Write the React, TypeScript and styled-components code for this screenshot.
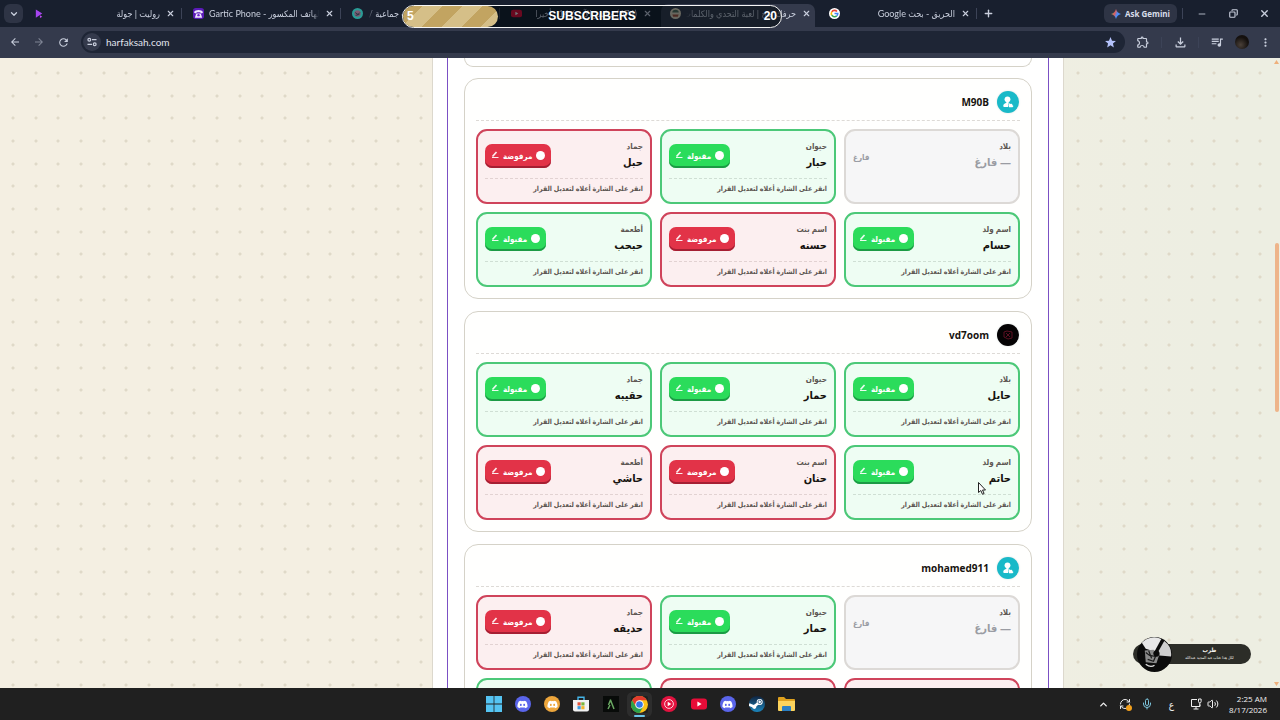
import React from 'react';
import styled, { createGlobalStyle, css } from 'styled-components';
import { ChevronDown, ChevronUp, X, Plus, Minus, Copy, Mic, Volume2, RefreshCw } from 'lucide-react';
import { FaDiscord, FaSteam } from 'react-icons/fa6';
import { MdArrowBack, MdArrowForward, MdRefresh, MdStar, MdOutlineExtension, MdOutlineFileDownload, MdQueueMusic, MdMoreVert } from 'react-icons/md';

type Status = 'ok' | 'no' | 'empty';
type Entry = { label: string; value: string; status: Status };
type Player = { name: string; dark?: boolean; entries: Entry[] };

const players: Player[] = [
  {
    name: 'M90B',
    entries: [
      { label: 'بلاد', value: '— فارغ', status: 'empty' },
      { label: 'حيوان', value: 'حبار', status: 'ok' },
      { label: 'جماد', value: 'حبل', status: 'no' },
      { label: 'اسم ولد', value: 'حسام', status: 'ok' },
      { label: 'اسم بنت', value: 'حسنه', status: 'no' },
      { label: 'أطعمة', value: 'حبحب', status: 'ok' },
    ],
  },
  {
    name: 'vd7oom',
    dark: true,
    entries: [
      { label: 'بلاد', value: 'حايل', status: 'ok' },
      { label: 'حيوان', value: 'حمار', status: 'ok' },
      { label: 'جماد', value: 'حقيبه', status: 'ok' },
      { label: 'اسم ولد', value: 'حاتم', status: 'ok' },
      { label: 'اسم بنت', value: 'حنان', status: 'no' },
      { label: 'أطعمة', value: 'حاشي', status: 'no' },
    ],
  },
  {
    name: 'mohamed911',
    entries: [
      { label: 'بلاد', value: '— فارغ', status: 'empty' },
      { label: 'حيوان', value: 'حمار', status: 'ok' },
      { label: 'جماد', value: 'حديقه', status: 'no' },
      { label: 'اسم ولد', value: 'حسن', status: 'no' },
      { label: 'اسم بنت', value: 'حنين', status: 'no' },
      { label: 'أطعمة', value: 'حمص', status: 'ok' },
    ],
  },
];

const tones = {
  ok: { border: '#4cc878', fill: '#eefdf3', button: '#2bdc5b', edge: '#1c9a45' },
  no: { border: '#cf445b', fill: '#fceff0', button: '#e23348', edge: '#a51f33' },
  empty: { border: '#dcd9d6', fill: '#f6f6f7', button: '#f6f6f7', edge: '#f6f6f7' },
};

/* three dots per 68px tile in each direction */
const dotSteps = [0, 23, 45];
const dotGrid = dotSteps.flatMap(y => dotSteps.map(x => ({ x, y })));
const dotImages = dotGrid.map(() => 'radial-gradient(circle at 13px 15px, #dfd9c8 1px, transparent 2px)').join(',');
const dotPositions = dotGrid.map(d => `${d.x}px ${d.y}px`).join(',');
const dotSizes = dotGrid.map(() => '68px 68px').join(',');

const GlobalStyle = createGlobalStyle`
  * { box-sizing: border-box; }
  body { margin: 0; font-family: "Open Sans", "DejaVu Sans Condensed", "DejaVu Sans", sans-serif; }
  button { font: inherit; border: 0; padding: 0; margin: 0; background: none; color: inherit; }
  svg { display: block; flex: none; }
`;

const Desktop = styled.div`
  height: 100vh;
  display: flex;
  flex-direction: column;
  overflow: hidden;
  position: relative;
`;

const TabStrip = styled.div`
  height: 27px;
  flex: none;
  display: flex;
  align-items: center;
  padding-left: 4px;
  background: #181f2e;
  color: #c9cfdd;
`;

const TabMenu = styled.button`
  width: 19px;
  height: 19px;
  border-radius: 6px;
  background: #2e3445;
  display: grid;
  place-items: center;
`;

const Tab = styled.div<{ $active?: boolean }>`
  height: 23px;
  margin: 4px 2px 0;
  padding: 0 3px 4px 9px;
  display: flex;
  align-items: center;
  gap: 5px;
  flex: 0 1 154px;
  min-width: 0;
  border-radius: 7px 7px 0 0;
  background: ${p => (p.$active ? '#343a4c' : 'transparent')};
`;

const TabTitle = styled.span<{ $ltr?: boolean }>`
  flex: 1;
  min-width: 0;
  overflow: hidden;
  white-space: nowrap;
  direction: ${p => (p.$ltr ? 'ltr' : 'rtl')};
  font-family: Lato, "DejaVu Sans Condensed", "DejaVu Sans", sans-serif;
  font-size: 9px;
  line-height: 14px;
  mask-image: linear-gradient(${p => (p.$ltr ? 'to left' : 'to right')}, transparent, #000 8px);
`;

const IconButton = styled.button<{ $size?: number }>`
  width: ${p => p.$size ?? 16}px;
  height: ${p => p.$size ?? 16}px;
  display: grid;
  place-items: center;
  flex: none;
`;

const Rule = styled.span<{ $hidden?: boolean }>`
  width: 1px;
  height: 11px;
  flex: none;
  background: ${p => (p.$hidden ? 'transparent' : '#3c4357')};
`;

const Spacer = styled.div`
  flex: 1;
`;

const GeminiButton = styled.button`
  width: 73px;
  height: 19px;
  margin-right: 5px;
  border-radius: 6px;
  background: #2e3445;
  color: #d9deea;
  display: flex;
  align-items: center;
  justify-content: center;
  gap: 4px;
  font-size: 8px;
  font-weight: 700;
  flex: none;
`;

const WindowButtons = styled.div`
  display: flex;
  gap: 15px;
  padding: 0 8px 0 11px;
`;

const Toolbar = styled.div`
  height: 31px;
  flex: none;
  display: flex;
  align-items: center;
  gap: 8px;
  padding: 0 7px 1px;
  background: #343a4c;
  color: #c9cfdd;
`;

const Address = styled.label`
  flex: 1;
  height: 22px;
  margin-left: 2px;
  padding: 0 8px 0 2px;
  border-radius: 11px;
  background: #1e2535;
  display: flex;
  align-items: center;
  gap: 5px;
`;

const SiteInfo = styled.span`
  width: 18px;
  height: 18px;
  border-radius: 50%;
  background: #343a4c;
  display: grid;
  place-items: center;
`;

const AddressInput = styled.input`
  flex: 1;
  min-width: 0;
  border: 0;
  padding: 0;
  background: none;
  color: #e0e4ee;
  font: 10px/16px Lato, sans-serif;
`;

const Portrait = styled.span`
  width: 14px;
  height: 14px;
  border-radius: 50%;
  background: radial-gradient(circle at 40% 70%, #4a4038, #14100e 60%);
`;

const Goal = styled.div`
  position: absolute;
  z-index: 2;
  top: 5px;
  left: calc(50% - 238px);
  width: 380px;
  height: 23px;
  border: 1px solid #f4f4f4;
  border-radius: 12px;
  background: rgba(0, 8, 12, 0.55);
  color: #fff;
  font: bold 12px/21px "Liberation Sans", sans-serif;
  display: grid;
  grid-template-columns: 1fr auto 1fr;
  padding: 0 4px;
  overflow: hidden;
`;

const GoalFill = styled.span`
  position: absolute;
  z-index: -1;
  inset: 0 auto 0 0;
  width: 25%;
  border-radius: 0 12px 12px 0;
  background: repeating-linear-gradient(135deg, #c2a461 0 14px, #d5bf88 14px 28px);
`;

const GoalTarget = styled.span`
  text-align: right;
`;

const Viewport = styled.main`
  flex: 1;
  min-height: 0;
  overflow: hidden;
  position: relative;
  padding-left: 216px;
  background-color: #f4efe2;
  background-image: ${dotImages}, linear-gradient(90deg, #f4efe2 50%, #edeee2 95%);
  background-position: ${dotPositions}, 0 0;
  background-size: ${dotSizes}, auto;
`;

const Sheet = styled.div`
  width: 100%;
  max-width: 632px;
  margin: 0 auto;
  padding: 0 14px;
  border: solid #dcd8cd;
  border-width: 0 1px;
  background: #fff;
`;

const Board = styled.div`
  direction: rtl;
  border: solid #7b50c4;
  border-width: 0 1px;
  padding: 0 16px;
  display: flex;
  flex-direction: column;
  gap: 12px;
`;

const Panel = styled.section`
  border: 1px solid #d5d2c8;
  border-radius: 14px;
  padding: 12px 11px 11px;
  background: #fffffe;
`;

const PanelTail = styled.div`
  height: 9px;
  margin-bottom: -1px;
  border: 1px solid #d5d2c8;
  border-top: 0;
  border-radius: 0 0 14px 14px;
`;

const PanelHead = styled.header`
  display: flex;
  align-items: center;
  gap: 8px;
  padding: 0 1px 7px 0;
  margin-bottom: 8px;
  border-bottom: 1px dashed #dddad6;
`;

const Avatar = styled.span<{ $dark?: boolean }>`
  width: 22px;
  height: 22px;
  border-radius: 50%;
  display: grid;
  place-items: center;
  color: ${p => (p.$dark ? '#5c1022' : '#fff')};
  background: ${p => (p.$dark ? '#050304' : '#19b9c8')};
  box-shadow: 0 0 2px #d4dcdc;
`;

const PlayerName = styled.h2`
  margin: 0;
  font-family: "Open Sans", sans-serif;
  font-size: 10px;
  line-height: 22px;
  font-weight: 700;
  color: #17130f;
`;

const Answers = styled.div`
  display: grid;
  grid-template-columns: repeat(3, minmax(0, 1fr));
  gap: 8px;
`;

const Answer = styled.article<{ $status: Status }>`
  min-height: 75px;
  padding: 7px 7px 6px;
  border: 2px solid ${p => tones[p.$status].border};
  border-radius: 11px;
  background: ${p => tones[p.$status].fill};
`;

const AnswerTop = styled.div`
  min-height: 36px;
  display: flex;
  justify-content: space-between;
  align-items: center;
`;

const AnswerText = styled.div`
  align-self: flex-start;
`;

const Category = styled.div`
  font-size: 8px;
  line-height: 15px;
  font-weight: 700;
  color: #5c5652;
`;

const Word = styled.div<{ $muted?: boolean }>`
  font-size: 11px;
  line-height: 18px;
  font-weight: 700;
  color: ${p => (p.$muted ? '#9a9ca3' : '#17130f')};
`;

const Verdict = styled.button<{ $status: Status }>`
  height: 24px;
  padding: 0 6px 2px;
  display: flex;
  align-items: center;
  gap: 4px;
  border-radius: 7px;
  font-size: 8px;
  font-weight: 700;
  color: #fff;
  background: ${p => tones[p.$status].button};
  box-shadow: inset 0 -2px 0 ${p => tones[p.$status].edge};
`;

const Bullet = styled.span`
  width: 9px;
  height: 9px;
  border-radius: 50%;
  background: #fff;
`;

const EmptyMark = styled.span`
  font-size: 8px;
  font-weight: 700;
  color: #9a9ca3;
`;

const Hint = styled.p<{ $status: Status }>`
  margin: 4px 0 0;
  padding-top: 3px;
  border-top: 1px dashed ${p => (p.$status === 'ok' ? '#cfdfd4' : '#e2d2d2')};
  font-size: 7px;
  line-height: 14px;
  font-weight: 700;
  color: #5c5652;
  white-space: nowrap;
`;

const ScrollRail = styled.div`
  position: absolute;
  inset: 0 0 0 auto;
  width: 7px;
  padding: 2px 0;
  display: grid;
  grid-template-rows: 4px 179fr 169fr 270fr 4px;
  justify-items: center;
`;

const ScrollThumb = styled.span`
  grid-row: 3;
  width: 4px;
  border-radius: 2px;
  background: #eeb48a;
`;

const ScrollArrow = styled.svg<{ $end?: boolean }>`
  grid-row: ${p => (p.$end ? 5 : 1)};
`;

const NowPlaying = styled.aside`
  position: absolute;
  right: 29px;
  bottom: 16px;
  width: 118px;
  height: 36px;
  display: grid;
  grid-template-columns: 4px 35px 1fr;
  align-items: center;
`;

const Track = styled.div`
  grid-area: 1 / 1 / 2 / 4;
  height: 20px;
  padding: 2px 0 0 35px;
  border-radius: 10px;
  background: #2c2d28;
  color: #f2f2ec;
  text-align: center;
  direction: rtl;
`;

const TrackTitle = styled.div`
  font-size: 6px;
  line-height: 9px;
  font-weight: 700;
`;

const TrackArtist = styled.div`
  font-size: 4px;
  line-height: 6px;
`;

const Album = styled.svg`
  grid-area: 1 / 2;
`;

const Taskbar = styled.footer`
  height: 32px;
  flex: none;
  display: grid;
  grid-template-columns: 1fr 310px 1fr;
  align-items: center;
  background: #202020;
  color: #f0f0f0;
`;

const Apps = styled.nav`
  display: flex;
  justify-content: space-between;
  grid-column: 2;
`;

const focusedApp = css`
  box-shadow: 0 0 0 4px #2d2d2d;
  &::after {
    content: '';
    position: absolute;
    left: 3px;
    right: 3px;
    bottom: -4px;
    height: 2px;
    border-radius: 1px;
    background: #6cc6ea;
  }
`;

const AppButton = styled.button<{ $focused?: boolean }>`
  width: 17px;
  height: 17px;
  display: grid;
  place-items: center;
  border-radius: 2px;
  position: relative;
  ${p => p.$focused && focusedApp}
`;

const Disc = styled.span<{ $color: string }>`
  width: 16px;
  height: 16px;
  border-radius: 50%;
  background: ${p => p.$color};
  color: #fff;
  display: grid;
  place-items: center;
`;

const Tray = styled.div`
  display: flex;
  align-items: center;
  justify-content: flex-end;
  gap: 10px;
  padding-right: 13px;
`;

const TrayPair = styled.div`
  display: flex;
  gap: 5px;
`;

const Sync = styled.span`
  position: relative;
  &::after {
    content: '';
    position: absolute;
    right: -1px;
    bottom: -1px;
    width: 6px;
    height: 6px;
    border-radius: 50%;
    background: #f3a01c;
  }
`;

const Language = styled.span`
  padding: 0 6px;
  font-size: 10px;
`;

const Clock = styled.time`
  text-align: right;
  font-size: 8px;
  line-height: 11px;
`;

const Pointer = styled.svg`
  position: absolute;
  left: calc(50% + 338px);
  top: 482px;
`;

const RouletteIcon = () => (
  <svg width="11" height="11" viewBox="0 0 12 12"><path d="M2 1.500l7 4.500-2.500 1.500L2 10.500z" fill="#a645f0" /><path d="M6.500 8l2.500 1.500L6.500 11z" fill="#c04df0" /></svg>
);
const PhoneIcon = () => (
  <svg width="11" height="11" viewBox="0 0 12 12"><rect width="12" height="12" rx="3" fill="#5a1bb8" /><path d="M1 4.500C2.500 1.500 9.500 1.500 11 4.500L9.500 6 7.500 4.500h-3L2.500 6zM3.500 6h5l1.500 4.500h-8z" fill="#f0e6ff" /><circle cx="6" cy="7.800" r="1.300" fill="#6a1fd0" /></svg>
);
const GroupIcon = () => (
  <svg width="11" height="11" viewBox="0 0 12 12"><circle cx="6" cy="6" r="6" fill="#2a9c96" /><circle cx="6" cy="6" r="3.500" fill="#7e5b73" /><path d="M3.500 5l3 2 2-2M4 8l4-1" stroke="#203440" fill="none" /></svg>
);
const YouTubeIcon = ({ w = 16 }: { w?: number }) => (
  <svg width={w} height={w} viewBox="0 0 16 16"><rect y="2.500" width="16" height="11" rx="3" fill="#e80c38" /><path d="M6.400 5.500v5l4.200-2.500z" fill="#fff" /></svg>
);
const HarfIcon = () => (
  <svg width="11" height="11" viewBox="0 0 12 12"><circle cx="6" cy="6" r="6" fill="#e6dcc4" /><path d="M2.500 5a3.500 3 0 0 1 7 0z" fill="#57735f" /><path d="M2.500 7h7l-1 2.500h-5z" fill="#a8563e" /></svg>
);
const GoogleIcon = () => (
  <svg width="11" height="11" viewBox="0 0 12 12"><circle cx="6" cy="6" r="6" fill="#fff" /><g fill="none" strokeWidth="1.700"><path d="M8.700 3.800A3.600 3.600 0 0 0 3 4.200" stroke="#ea4335" /><path d="M3 4.200a3.600 3.600 0 0 0 0 3.600" stroke="#fbbc05" /><path d="M3 7.800a3.600 3.600 0 0 0 5.400.8" stroke="#34a853" /><path d="M8.400 8.600A3.600 3.600 0 0 0 9.600 6H6" stroke="#4285f4" /></g></svg>
);
const GeminiIcon = () => (
  <svg width="10" height="10" viewBox="0 0 12 12"><defs><linearGradient id="gem" x1="0" y1="0.300" x2="1" y2="0.700"><stop offset="0" stopColor="#43b56f" /><stop offset=".35" stopColor="#e35b57" /><stop offset=".6" stopColor="#4b8df8" /><stop offset="1" stopColor="#4b8df8" /></linearGradient></defs><path d="M6 0q1.200 4.800 6 6-4.800 1.200-6 6-1.200-4.800-6-6 4.800-1.200 6-6z" fill="url(#gem)" /></svg>
);
const TuneIcon = () => (
  <svg width="10" height="10" viewBox="0 0 10 10" fill="none" stroke="currentColor" strokeWidth="1.200"><circle cx="2.300" cy="2.700" r="1.400" /><path d="M5 2.700h4.500M.5 7.300H5" /><circle cx="7.700" cy="7.300" r="1.400" /></svg>
);
const ChromeIcon = () => (
  <svg width="17" height="17" viewBox="0 0 16 16"><circle cx="8" cy="8" r="8" fill="#fbc116" /><path d="M8 4h6.930A8 8 0 0 0 1.070 4L4.600 10z" fill="#e33b2e" /><path d="M1.070 4A8 8 0 0 0 8 16l3.500-6H4.600z" fill="#2ba24c" /><circle cx="8" cy="8" r="4" fill="#fff" /><circle cx="8" cy="8" r="3.100" fill="#3478e8" /></svg>
);
const WindowsIcon = () => (
  <svg width="16" height="16" viewBox="0 0 16 16" fill="#55c4f2"><path d="M0 0h7.600v7.600H0zM8.400 0H16v7.600H8.400zM0 8.400h7.600V16H0zM8.400 8.400H16V16H8.400z" /></svg>
);
const StoreIcon = () => (
  <svg width="16" height="16" viewBox="0 0 16 16"><path d="M5 5V1.200h6V5" fill="none" stroke="#45b5e8" strokeWidth="1.400" /><path d="M0 4h16v9.500a2 2 0 0 1-2 2H2a2 2 0 0 1-2-2z" fill="#f2f2f2" /><path d="M4.500 6.300h3.200v3.200H4.500z" fill="#e2543b" /><path d="M8.300 6.300h3.200v3.200H8.300z" fill="#7cb63c" /><path d="M4.500 10.100h3.200v3.200H4.500z" fill="#3a9be0" /><path d="M8.300 10.100h3.200v3.200H8.300z" fill="#f2b42c" /></svg>
);
const LambdaIcon = () => (
  <svg width="16" height="16" viewBox="0 0 16 16"><rect width="16" height="16" fill="#080b09" /><path d="M5 13l2-4M7.300 3.500L11 13M7.500 4L5.500 9" fill="none" stroke="#6aa862" strokeWidth="1.500" /></svg>
);
const MusicIcon = () => (
  <svg width="16" height="16" viewBox="0 0 16 16"><circle cx="8" cy="8" r="8" fill="#e3123f" /><circle cx="8" cy="8" r="4.400" fill="none" stroke="#fff" strokeWidth=".8" /><path d="M6.700 5.700v4.600L10.300 8z" fill="#fff" /></svg>
);
const FolderIcon = () => (
  <svg width="17" height="16" viewBox="0 0 17 16"><path d="M0 2a1 1 0 0 1 1-1h5l2 2h8a1 1 0 0 1 1 1v3H0z" fill="#dfa11e" /><path d="M0 5h17v9a1 1 0 0 1-1 1H1a1 1 0 0 1-1-1z" fill="#fbd35c" /><path d="M4 15v-4a1 1 0 0 1 1-1h7a1 1 0 0 1 1 1v4z" fill="#2a7fc4" /></svg>
);
const SteamDisc = () => (
  <svg width="16" height="16" viewBox="0 0 16 16"><defs><linearGradient id="steam" x1="0" y1="0" x2="0" y2="1"><stop offset="0" stopColor="#10233f" /><stop offset="1" stopColor="#1b86bd" /></linearGradient></defs><circle cx="8" cy="8" r="8" fill="url(#steam)" /><path d="M0 8.500l5 2L9.500 7" fill="none" stroke="#fff" strokeWidth="2.600" /><circle cx="5.300" cy="10.800" r="2.100" fill="#fff" /><circle cx="10.700" cy="5.900" r="3" fill="#fff" /><circle cx="10.700" cy="5.900" r="1.700" fill="none" stroke="#1a4d76" strokeWidth=".8" /></svg>
);
const NetworkIcon = () => (
  <svg width="12" height="12" viewBox="0 0 12 12" fill="none" stroke="currentColor"><path d="M7 1.500H1.500v7H10V6.500M3.500 11h5M6 8.500V11" /><path d="M8.500 1v2.500a1.300 1.300 0 0 0 2.600 0V1zM9.800 5v3" /></svg>
);
const EditIcon = () => (
  <svg width="8" height="8" viewBox="0 0 8 8" fill="none" stroke="#fff" strokeOpacity=".9"><path d="M1 6.500h6.500" /><path d="M1.500 5.500L5.500 1" strokeWidth="1.700" /></svg>
);
const PersonIcon = () => (
  <svg width="12" height="12" viewBox="0 0 12 12" fill="currentColor"><circle cx="5.500" cy="3.300" r="2.900" /><path d="M4.300 5.500h2.400v1.800L6 11H2.200C1 11 1 9.500 1.800 8.300 2.400 7.400 4.300 7 4.300 7z" /><path d="M7.500 7l1 1 1.500-.3.500 1.500 1 .8-1 1.200H7L6.600 9.500z" /></svg>
);
const SketchIcon = () => (
  <svg width="12" height="12" viewBox="0 0 12 12" fill="none" stroke="currentColor"><path d="M2 3l3-1 5 1v6l-4 1-4-2zM4 4l4 4M8 4L4 8" /></svg>
);
const AlbumArt = () => (
  <Album width="35" height="35" viewBox="0 0 36 36">
    <circle cx="18" cy="18" r="18" fill="#0c0c0c" />
    <path d="M5 6A17 17 0 0 1 25 2L18 15 9 12z" fill="#e8e8e8" />
    <path d="M28 4a17 17 0 0 1 7 16l-12-1-1-4z" fill="#cfcfcf" />
    <path d="M8 14l9-1 6 5-3 9-11-1z" fill="#8a8a8a" />
    <path d="M9 16l4 3 6 1-2 5-6-2M12 14l3 8" fill="none" stroke="#1c1c1c" strokeWidth="1.300" />
    <path d="M9 28q5 4 9 1" fill="none" stroke="#ddd" strokeWidth="1.300" />
    <circle cx="20" cy="17" r="3.200" fill="#0a0a0a" />
  </Album>
);

const tabs = [
  { icon: <RouletteIcon />, title: 'روليت | جولة' },
  { icon: <PhoneIcon />, title: 'Gartic Phone - لعبة الهاتف المكسور', ltr: true },
  { icon: <GroupIcon />, title: 'العب مع أصحابك ألعاب جماعية / مجانا' },
  { icon: <YouTubeIcon w={11} />, title: '(674) مباشر الآن 14.6 : أخيرا' },
  { icon: <HarfIcon />, title: 'حرفك صح | لعبة التحدي والكلمات', active: true },
  { icon: <GoogleIcon />, title: 'الحريق - بحث Google' },
];

const AnswerCard = ({ entry }: { entry: Entry }) => (
  <Answer $status={entry.status}>
    <AnswerTop>
      <AnswerText>
        <Category>{entry.label}</Category>
        <Word $muted={entry.status === 'empty'}>{entry.value}</Word>
      </AnswerText>
      {entry.status === 'empty' ? (
        <EmptyMark>فارغ</EmptyMark>
      ) : (
        <Verdict $status={entry.status}>
          <Bullet />
          {entry.status === 'ok' ? 'مقبولة' : 'مرفوضة'}
          <EditIcon />
        </Verdict>
      )}
    </AnswerTop>
    {entry.status !== 'empty' && <Hint $status={entry.status}>انقر على الشارة أعلاه لتعديل القرار</Hint>}
  </Answer>
);

export default function App() {
  return (
    <Desktop>
      <GlobalStyle />
      <TabStrip>
        <TabMenu aria-label="Search tabs"><ChevronDown size={10} strokeWidth={3} /></TabMenu>
        {tabs.map((tab, i) => (
          <React.Fragment key={tab.title}>
            <Tab $active={tab.active}>
              {tab.icon}
              <TabTitle $ltr={tab.ltr}>{tab.title}</TabTitle>
              <IconButton $size={11} aria-label="Close tab"><X size={9} strokeWidth={3} /></IconButton>
            </Tab>
            <Rule $hidden={i === 3 || i === 4} />
          </React.Fragment>
        ))}
        <IconButton $size={22} aria-label="New tab"><Plus size={11} strokeWidth={3} /></IconButton>
        <Spacer />
        <GeminiButton><GeminiIcon />Ask Gemini</GeminiButton>
        <Rule />
        <WindowButtons>
          <IconButton aria-label="Minimize"><Minus size={10} /></IconButton>
          <IconButton aria-label="Restore"><Copy size={9} transform="scale(-1 1)" strokeWidth={3} /></IconButton>
          <IconButton aria-label="Close"><X size={11} strokeWidth={3} /></IconButton>
        </WindowButtons>
      </TabStrip>
      <Toolbar>
        <IconButton aria-label="Back"><MdArrowBack size={12} /></IconButton>
        <IconButton aria-label="Forward"><MdArrowForward size={12} opacity={0.5} /></IconButton>
        <IconButton aria-label="Reload"><MdRefresh size={13} /></IconButton>
        <Address>
          <SiteInfo><TuneIcon /></SiteInfo>
          <AddressInput aria-label="Address" defaultValue="harfaksah.com" />
          <MdStar size={13} color="#b4c2fb" />
        </Address>
        <IconButton $size={20} aria-label="Extensions"><MdOutlineExtension size={14} /></IconButton>
        <Rule />
        <IconButton $size={20} aria-label="Downloads"><MdOutlineFileDownload size={15} /></IconButton>
        <Rule />
        <IconButton $size={20} aria-label="Media"><MdQueueMusic size={14} /></IconButton>
        <Portrait />
        <IconButton aria-label="Menu"><MdMoreVert size={13} /></IconButton>
      </Toolbar>
      <Goal>
        <GoalFill />
        <span>5</span><span>SUBSCRIBERS</span><GoalTarget>20</GoalTarget>
      </Goal>
      <Viewport>
        <Sheet>
          <Board>
            <PanelTail />
            {players.map(player => (
              <Panel key={player.name}>
                <PanelHead>
                  <Avatar $dark={player.dark}>{player.dark ? <SketchIcon /> : <PersonIcon />}</Avatar>
                  <PlayerName>{player.name}</PlayerName>
                </PanelHead>
                <Answers>
                  {player.entries.map(entry => <AnswerCard key={entry.label} entry={entry} />)}
                </Answers>
              </Panel>
            ))}
          </Board>
        </Sheet>
        <ScrollRail>
          <ScrollArrow width="5" height="4" viewBox="0 0 5 4"><path d="M0 4L2.500 0 5 4z" fill="#eeb07c" /></ScrollArrow>
          <ScrollThumb />
          <ScrollArrow $end width="5" height="4" viewBox="0 0 5 4"><path d="M0 0l2.500 4L5 0z" fill="#eeb07c" /></ScrollArrow>
        </ScrollRail>
        <NowPlaying>
          <Track>
            <TrackTitle>طرب</TrackTitle>
            <TrackArtist>لكل هذا عتاب عبد المجيد عبدالله</TrackArtist>
          </Track>
          <AlbumArt />
        </NowPlaying>
      </Viewport>
      <Taskbar>
        <Apps>
          <AppButton aria-label="Start"><WindowsIcon /></AppButton>
          <AppButton aria-label="Discord"><Disc $color="#5a65ea"><FaDiscord size={11} /></Disc></AppButton>
          <AppButton aria-label="Discord Canary"><Disc $color="#eda63c"><FaDiscord size={11} /></Disc></AppButton>
          <AppButton aria-label="Store"><StoreIcon /></AppButton>
          <AppButton aria-label="Lambda"><LambdaIcon /></AppButton>
          <AppButton aria-label="Chrome" $focused><ChromeIcon /></AppButton>
          <AppButton aria-label="Music"><MusicIcon /></AppButton>
          <AppButton aria-label="YouTube"><YouTubeIcon /></AppButton>
          <AppButton aria-label="Discord PTB"><Disc $color="#5a65ea"><FaDiscord size={11} /></Disc></AppButton>
          <AppButton aria-label="Steam"><SteamDisc /></AppButton>
          <AppButton aria-label="Files"><FolderIcon /></AppButton>
        </Apps>
        <Tray>
          <ChevronUp size={11} strokeWidth={3} />
          <Sync><RefreshCw size={12} /></Sync>
          <Mic size={12} color="#7cc4dc" />
          <Language>ع</Language>
          <TrayPair><NetworkIcon /><Volume2 size={12} /></TrayPair>
          <Clock>2:25 AM<br />8/17/2026</Clock>
        </Tray>
      </Taskbar>
      <Pointer width="8" height="13" viewBox="0 0 8 13"><path d="M.5.5v10l2.300-2 1.700 3.800 1.600-.8L4.500 8h3z" fill="#fff" stroke="#222" strokeWidth="1" /></Pointer>
    </Desktop>
  );
}
